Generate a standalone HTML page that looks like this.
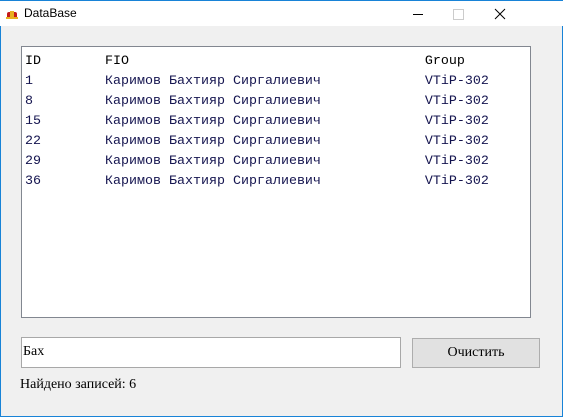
<!DOCTYPE html>
<html><head><meta charset="utf-8"><style>
body{margin:0;width:563px;height:417px;background:#f0f0f0;position:relative;overflow:hidden;font-family:"Liberation Serif",serif}
.win{position:absolute;left:0;top:0;width:561px;height:416px;border:1px solid #1883d7;border-top:none;}
.title{position:absolute;left:0;top:0;width:563px;height:26px;background:#fff;border-top:1px solid #1883d7;box-sizing:border-box}
.title span{position:absolute;left:24px;top:5px;font:12px "Liberation Sans",sans-serif;color:#000}
.lb{position:absolute;left:21px;top:46px;width:508px;height:270px;background:#fff;border:1px solid #828790}
pre{margin:0;position:absolute;left:3px;top:5px;font:13.33px/20px "Liberation Mono",monospace;color:#14144f}
.tb{position:absolute;left:21px;top:337px;width:380px;height:31px;background:#fff;border:1px solid #a8a8a8;box-sizing:border-box;font-size:14px;padding:6px 1px}
.bt{position:absolute;left:412px;top:338px;width:128px;height:30px;background:#e1e1e1;border:1px solid #adadad;box-sizing:border-box;text-align:center;font-size:14px;line-height:28px}
.lbl{position:absolute;left:20px;top:377px;font-size:14px}
</style></head><body>
<div class="win"></div>
<div class="title">
<svg style="position:absolute;left:6px;top:8px" width="12" height="11"><rect x="1" y="3" width="10" height="7" rx="2" fill="#c41a1a"/><rect x="4" y="2" width="4" height="8" fill="#e8b020"/><rect x="0" y="8" width="12" height="2" fill="#e8b020"/></svg>
<span>DataBase</span>
<div style="position:absolute;left:413px;top:13px;width:10px;height:1px;background:#000"></div>
<div style="position:absolute;left:453px;top:8px;width:9px;height:9px;border:1px solid #ccc"></div>
<svg style="position:absolute;left:494px;top:7px" width="12" height="12"><path d="M1 1L11 11M11 1L1 11" stroke="#000" stroke-width="1"/></svg>
</div>
<div class="lb"><pre><span style="color:#000">ID        FIO                                     Group</span>
1         Каримов Бахтияр Сиргалиевич             VTiP-302
8         Каримов Бахтияр Сиргалиевич             VTiP-302
15        Каримов Бахтияр Сиргалиевич             VTiP-302
22        Каримов Бахтияр Сиргалиевич             VTiP-302
29        Каримов Бахтияр Сиргалиевич             VTiP-302
36        Каримов Бахтияр Сиргалиевич             VTiP-302</pre></div>
<div class="tb">Бах</div>
<div class="bt">Очистить</div>
<div class="lbl">Найдено записей: 6</div>
</body></html>
